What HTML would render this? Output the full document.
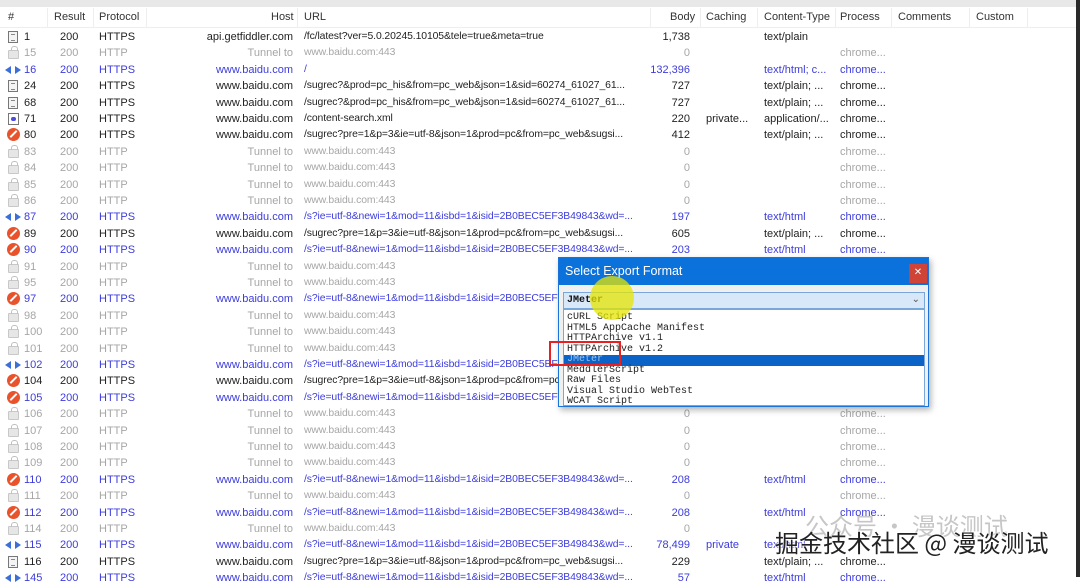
<!DOCTYPE html>
<html><head><meta charset="utf-8"><style>
*{margin:0;padding:0;box-sizing:border-box}
body{width:1080px;height:577px;overflow:hidden;background:#fff;font-family:"Liberation Sans",sans-serif;font-size:11px;color:#222;position:relative}
.top{position:absolute;left:0;top:0;width:1080px;height:7px;background:#e8e8e8}
.hd{position:absolute;left:0;top:7px;width:1076px;height:21px;background:#fff;border-bottom:1px solid #eee}
.hd span{position:absolute;top:4px;color:#333}
.sep{position:absolute;top:8px;width:1px;height:20px;background:#eee}
.rb{position:absolute;right:0;top:0;width:4px;height:577px;background:#2a2a2a}
.r{position:absolute;left:0;width:1076px;height:16px;line-height:16px;white-space:nowrap}
.r span{position:absolute;top:0}
.n{left:24px}.re{left:60px}.p{left:99px}.h{right:783px;text-align:right}.u{left:304px;font-size:10.4px;letter-spacing:-0.1px}.b{right:386px}.c{left:706px}.ct{left:764px}.pr{left:840px}
.g{color:#a6a6a6}.bl{color:#3c3cdc}
.ic{position:absolute;left:6px;top:2px;width:13px;height:12px}
.d{border:1px solid #777;background:#f4f4f4;left:8px;width:10px}
.d::after{content:"";position:absolute;left:2px;top:2px;width:4px;height:5px;border-top:1px solid #888;border-bottom:1px solid #888}
.t{border:1px solid #c8c8c8;background:#e6e6e6;top:5px;height:9px;left:8px;width:11px;border-radius:1px}
.t::before{content:"";position:absolute;left:2px;top:-5px;width:5px;height:4px;border:1px solid #c0c0c0;border-bottom:none;border-radius:3px 3px 0 0}
.a{left:4px;top:3px;width:18px;height:10px}
.x{background:#e8532c;border-radius:50%;width:13px;height:13px;top:1px;left:7px}
.x::after{content:"";position:absolute;left:2px;top:5px;width:9px;height:2px;background:#fff;transform:rotate(-45deg)}
.m{border:1px solid #777;background:#fff;left:8px;width:11px}
.m::after{content:"";position:absolute;left:2px;top:3px;width:5px;height:4px;background:#4c4ce0;border-radius:2px}
.dlg{position:absolute;left:558px;top:257px;width:371px;height:150px;background:#f0f0f0;border:1px solid #1a73d9;box-shadow:2px 3px 6px rgba(0,0,0,.3)}
.tt{position:absolute;left:0;top:0;width:369px;height:27px;background:#0b72dc;color:#fff;font-size:12.5px;line-height:26px;padding-left:6px}
.cl{position:absolute;left:350px;top:6px;width:18px;height:19px;background:#cf4436;color:#fff;font-size:10px;text-align:center;line-height:18px}
.cb{position:absolute;left:4px;top:34px;width:362px;height:17px;background:#d9e8f8;border:1px solid #7aa7d8;font-family:"Liberation Mono",monospace;font-size:10px;line-height:15px;padding-left:3px;color:#111;font-weight:bold}
.cb i{position:absolute;right:4px;top:0;font-style:normal;color:#555;font-weight:normal}
.ls{position:absolute;left:4px;top:51px;width:362px;height:97px;background:#fff;border:1px solid #7aa7d8;font-family:"Liberation Mono",monospace;font-size:10px;line-height:10.5px;color:#222;padding-top:3px}
.ls div{padding-left:3px;height:10.5px}
.ls .sel{background:#0b63c8;color:#9cc3f0}
.yc{position:absolute;left:590px;top:276px;width:44px;height:44px;border-radius:50%;background:rgba(230,230,0,.75)}
.rd{position:absolute;left:549px;top:341px;width:72px;height:25px;border:2px solid #e82020}
.wm{position:absolute;left:775px;top:526px;font-family:"Noto Sans CJK SC",sans-serif;font-size:24px;line-height:32px;color:#222;white-space:nowrap;text-shadow:0 0 2px #fff,0 0 2px #fff}
.wm2{position:absolute;left:805px;top:510px;font-family:"Noto Sans CJK SC",sans-serif;font-size:24px;line-height:30px;color:rgba(160,160,160,.6);white-space:nowrap}
</style></head><body>
<svg width="0" height="0" style="position:absolute"><defs><symbol id="ar" viewBox="0 0 18 10"><path d="M1 5L7 1V9Z M17 5L11 1V9Z" fill="#3d6fd8"/></symbol></defs></svg>
<div class="top"></div>
<div class="hd">
<span style="left:8px">#</span><span style="left:54px">Result</span><span style="left:99px">Protocol</span><span style="left:271px">Host</span><span style="left:304px">URL</span><span style="left:670px">Body</span><span style="left:706px">Caching</span><span style="left:764px">Content-Type</span><span style="left:840px">Process</span><span style="left:898px">Comments</span><span style="left:976px">Custom</span>
</div>
<div class="sep" style="left:47px"></div><div class="sep" style="left:93px"></div><div class="sep" style="left:146px"></div><div class="sep" style="left:297px"></div><div class="sep" style="left:650px"></div><div class="sep" style="left:700px"></div><div class="sep" style="left:757px"></div><div class="sep" style="left:835px"></div><div class="sep" style="left:891px"></div><div class="sep" style="left:969px"></div><div class="sep" style="left:1027px"></div>

<div class="r" style="top:29px"><i class="ic d"></i><span class="n">1</span><span class="re">200</span><span class="p">HTTPS</span><span class="h">api.getfiddler.com</span><span class="u">/fc/latest?ver=5.0.20245.10105&amp;tele=true&amp;meta=true</span><span class="b">1,738</span><span class="ct">text/plain</span></div>
<div class="r g" style="top:45.4px"><i class="ic t"></i><span class="n">15</span><span class="re">200</span><span class="p">HTTP</span><span class="h">Tunnel to</span><span class="u">www.baidu.com:443</span><span class="b">0</span><span class="pr">chrome...</span></div>
<div class="r bl" style="top:61.8px"><svg class="ic a"><use href="#ar"/></svg><span class="n">16</span><span class="re">200</span><span class="p">HTTPS</span><span class="h">www.baidu.com</span><span class="u">/</span><span class="b">132,396</span><span class="ct">text/html; c...</span><span class="pr">chrome...</span></div>
<div class="r" style="top:78.2px"><i class="ic d"></i><span class="n">24</span><span class="re">200</span><span class="p">HTTPS</span><span class="h">www.baidu.com</span><span class="u">/sugrec?&amp;prod=pc_his&amp;from=pc_web&amp;json=1&amp;sid=60274_61027_61...</span><span class="b">727</span><span class="ct">text/plain; ...</span><span class="pr">chrome...</span></div>
<div class="r" style="top:94.6px"><i class="ic d"></i><span class="n">68</span><span class="re">200</span><span class="p">HTTPS</span><span class="h">www.baidu.com</span><span class="u">/sugrec?&amp;prod=pc_his&amp;from=pc_web&amp;json=1&amp;sid=60274_61027_61...</span><span class="b">727</span><span class="ct">text/plain; ...</span><span class="pr">chrome...</span></div>
<div class="r" style="top:111px"><i class="ic m"></i><span class="n">71</span><span class="re">200</span><span class="p">HTTPS</span><span class="h">www.baidu.com</span><span class="u">/content-search.xml</span><span class="b">220</span><span class="c">private...</span><span class="ct">application/...</span><span class="pr">chrome...</span></div>
<div class="r" style="top:127.4px"><i class="ic x"></i><span class="n">80</span><span class="re">200</span><span class="p">HTTPS</span><span class="h">www.baidu.com</span><span class="u">/sugrec?pre=1&amp;p=3&amp;ie=utf-8&amp;json=1&amp;prod=pc&amp;from=pc_web&amp;sugsi...</span><span class="b">412</span><span class="ct">text/plain; ...</span><span class="pr">chrome...</span></div>
<div class="r g" style="top:143.8px"><i class="ic t"></i><span class="n">83</span><span class="re">200</span><span class="p">HTTP</span><span class="h">Tunnel to</span><span class="u">www.baidu.com:443</span><span class="b">0</span><span class="pr">chrome...</span></div>
<div class="r g" style="top:160.2px"><i class="ic t"></i><span class="n">84</span><span class="re">200</span><span class="p">HTTP</span><span class="h">Tunnel to</span><span class="u">www.baidu.com:443</span><span class="b">0</span><span class="pr">chrome...</span></div>
<div class="r g" style="top:176.6px"><i class="ic t"></i><span class="n">85</span><span class="re">200</span><span class="p">HTTP</span><span class="h">Tunnel to</span><span class="u">www.baidu.com:443</span><span class="b">0</span><span class="pr">chrome...</span></div>
<div class="r g" style="top:193px"><i class="ic t"></i><span class="n">86</span><span class="re">200</span><span class="p">HTTP</span><span class="h">Tunnel to</span><span class="u">www.baidu.com:443</span><span class="b">0</span><span class="pr">chrome...</span></div>
<div class="r bl" style="top:209.4px"><svg class="ic a"><use href="#ar"/></svg><span class="n">87</span><span class="re">200</span><span class="p">HTTPS</span><span class="h">www.baidu.com</span><span class="u">/s?ie=utf-8&amp;newi=1&amp;mod=11&amp;isbd=1&amp;isid=2B0BEC5EF3B49843&amp;wd=...</span><span class="b">197</span><span class="ct">text/html</span><span class="pr">chrome...</span></div>
<div class="r" style="top:225.8px"><i class="ic x"></i><span class="n">89</span><span class="re">200</span><span class="p">HTTPS</span><span class="h">www.baidu.com</span><span class="u">/sugrec?pre=1&amp;p=3&amp;ie=utf-8&amp;json=1&amp;prod=pc&amp;from=pc_web&amp;sugsi...</span><span class="b">605</span><span class="ct">text/plain; ...</span><span class="pr">chrome...</span></div>
<div class="r bl" style="top:242.2px"><i class="ic x"></i><span class="n">90</span><span class="re">200</span><span class="p">HTTPS</span><span class="h">www.baidu.com</span><span class="u">/s?ie=utf-8&amp;newi=1&amp;mod=11&amp;isbd=1&amp;isid=2B0BEC5EF3B49843&amp;wd=...</span><span class="b">203</span><span class="ct">text/html</span><span class="pr">chrome...</span></div>
<div class="r g" style="top:258.6px"><i class="ic t"></i><span class="n">91</span><span class="re">200</span><span class="p">HTTP</span><span class="h">Tunnel to</span><span class="u">www.baidu.com:443</span><span class="b">0</span><span class="pr">chrome...</span></div>
<div class="r g" style="top:275px"><i class="ic t"></i><span class="n">95</span><span class="re">200</span><span class="p">HTTP</span><span class="h">Tunnel to</span><span class="u">www.baidu.com:443</span><span class="b">0</span><span class="pr">chrome...</span></div>
<div class="r bl" style="top:291.4px"><i class="ic x"></i><span class="n">97</span><span class="re">200</span><span class="p">HTTPS</span><span class="h">www.baidu.com</span><span class="u">/s?ie=utf-8&amp;newi=1&amp;mod=11&amp;isbd=1&amp;isid=2B0BEC5EF3B49843&amp;wd=...</span><span class="b">203</span><span class="ct">text/html</span><span class="pr">chrome...</span></div>
<div class="r g" style="top:307.8px"><i class="ic t"></i><span class="n">98</span><span class="re">200</span><span class="p">HTTP</span><span class="h">Tunnel to</span><span class="u">www.baidu.com:443</span><span class="b">0</span><span class="pr">chrome...</span></div>
<div class="r g" style="top:324.2px"><i class="ic t"></i><span class="n">100</span><span class="re">200</span><span class="p">HTTP</span><span class="h">Tunnel to</span><span class="u">www.baidu.com:443</span><span class="b">0</span><span class="pr">chrome...</span></div>
<div class="r g" style="top:340.6px"><i class="ic t"></i><span class="n">101</span><span class="re">200</span><span class="p">HTTP</span><span class="h">Tunnel to</span><span class="u">www.baidu.com:443</span><span class="b">0</span><span class="pr">chrome...</span></div>
<div class="r bl" style="top:357px"><svg class="ic a"><use href="#ar"/></svg><span class="n">102</span><span class="re">200</span><span class="p">HTTPS</span><span class="h">www.baidu.com</span><span class="u">/s?ie=utf-8&amp;newi=1&amp;mod=11&amp;isbd=1&amp;isid=2B0BEC5EF3B49843&amp;wd=...</span><span class="b">203</span><span class="ct">text/html</span><span class="pr">chrome...</span></div>
<div class="r" style="top:373.4px"><i class="ic x"></i><span class="n">104</span><span class="re">200</span><span class="p">HTTPS</span><span class="h">www.baidu.com</span><span class="u">/sugrec?pre=1&amp;p=3&amp;ie=utf-8&amp;json=1&amp;prod=pc&amp;from=pc_web&amp;sugsi...</span><span class="b">605</span><span class="ct">text/plain; ...</span><span class="pr">chrome...</span></div>
<div class="r bl" style="top:389.8px"><i class="ic x"></i><span class="n">105</span><span class="re">200</span><span class="p">HTTPS</span><span class="h">www.baidu.com</span><span class="u">/s?ie=utf-8&amp;newi=1&amp;mod=11&amp;isbd=1&amp;isid=2B0BEC5EF3B49843&amp;wd=...</span><span class="b">203</span><span class="ct">text/html</span><span class="pr">chrome...</span></div>
<div class="r g" style="top:406.2px"><i class="ic t"></i><span class="n">106</span><span class="re">200</span><span class="p">HTTP</span><span class="h">Tunnel to</span><span class="u">www.baidu.com:443</span><span class="b">0</span><span class="pr">chrome...</span></div>
<div class="r g" style="top:422.6px"><i class="ic t"></i><span class="n">107</span><span class="re">200</span><span class="p">HTTP</span><span class="h">Tunnel to</span><span class="u">www.baidu.com:443</span><span class="b">0</span><span class="pr">chrome...</span></div>
<div class="r g" style="top:439px"><i class="ic t"></i><span class="n">108</span><span class="re">200</span><span class="p">HTTP</span><span class="h">Tunnel to</span><span class="u">www.baidu.com:443</span><span class="b">0</span><span class="pr">chrome...</span></div>
<div class="r g" style="top:455.4px"><i class="ic t"></i><span class="n">109</span><span class="re">200</span><span class="p">HTTP</span><span class="h">Tunnel to</span><span class="u">www.baidu.com:443</span><span class="b">0</span><span class="pr">chrome...</span></div>
<div class="r bl" style="top:471.8px"><i class="ic x"></i><span class="n">110</span><span class="re">200</span><span class="p">HTTPS</span><span class="h">www.baidu.com</span><span class="u">/s?ie=utf-8&amp;newi=1&amp;mod=11&amp;isbd=1&amp;isid=2B0BEC5EF3B49843&amp;wd=...</span><span class="b">208</span><span class="ct">text/html</span><span class="pr">chrome...</span></div>
<div class="r g" style="top:488.2px"><i class="ic t"></i><span class="n">111</span><span class="re">200</span><span class="p">HTTP</span><span class="h">Tunnel to</span><span class="u">www.baidu.com:443</span><span class="b">0</span><span class="pr">chrome...</span></div>
<div class="r bl" style="top:504.6px"><i class="ic x"></i><span class="n">112</span><span class="re">200</span><span class="p">HTTPS</span><span class="h">www.baidu.com</span><span class="u">/s?ie=utf-8&amp;newi=1&amp;mod=11&amp;isbd=1&amp;isid=2B0BEC5EF3B49843&amp;wd=...</span><span class="b">208</span><span class="ct">text/html</span><span class="pr">chrome...</span></div>
<div class="r g" style="top:521px"><i class="ic t"></i><span class="n">114</span><span class="re">200</span><span class="p">HTTP</span><span class="h">Tunnel to</span><span class="u">www.baidu.com:443</span><span class="b">0</span></div>
<div class="r bl" style="top:537.4px"><svg class="ic a"><use href="#ar"/></svg><span class="n">115</span><span class="re">200</span><span class="p">HTTPS</span><span class="h">www.baidu.com</span><span class="u">/s?ie=utf-8&amp;newi=1&amp;mod=11&amp;isbd=1&amp;isid=2B0BEC5EF3B49843&amp;wd=...</span><span class="b">78,499</span><span class="c">private</span><span class="ct">text/html</span></div>
<div class="r" style="top:553.8px"><i class="ic d"></i><span class="n">116</span><span class="re">200</span><span class="p">HTTPS</span><span class="h">www.baidu.com</span><span class="u">/sugrec?pre=1&amp;p=3&amp;ie=utf-8&amp;json=1&amp;prod=pc&amp;from=pc_web&amp;sugsi...</span><span class="b">229</span><span class="ct">text/plain; ...</span><span class="pr">chrome...</span></div>
<div class="r bl" style="top:570.2px"><svg class="ic a"><use href="#ar"/></svg><span class="n">145</span><span class="re">200</span><span class="p">HTTPS</span><span class="h">www.baidu.com</span><span class="u">/s?ie=utf-8&amp;newi=1&amp;mod=11&amp;isbd=1&amp;isid=2B0BEC5EF3B49843&amp;wd=...</span><span class="b">57</span><span class="ct">text/html</span><span class="pr">chrome...</span></div>

<div class="dlg">
<div class="tt">Select Export Format</div>
<div class="cl">✕</div>
<div class="cb">JMeter<i>⌄</i></div>
<div class="ls">
<div>cURL Script</div><div>HTML5 AppCache Manifest</div><div>HTTPArchive v1.1</div><div>HTTPArchive v1.2</div><div class="sel">JMeter</div><div>MeddlerScript</div><div>Raw Files</div><div>Visual Studio WebTest</div><div>WCAT Script</div>
</div>
</div>
<div class="yc"></div>
<div class="rd"></div>
<div class="wm2">公众号 · 漫谈测试</div>
<div class="wm">掘金技术社区 @ 漫谈测试</div>
<div class="rb"></div>
</body></html>
